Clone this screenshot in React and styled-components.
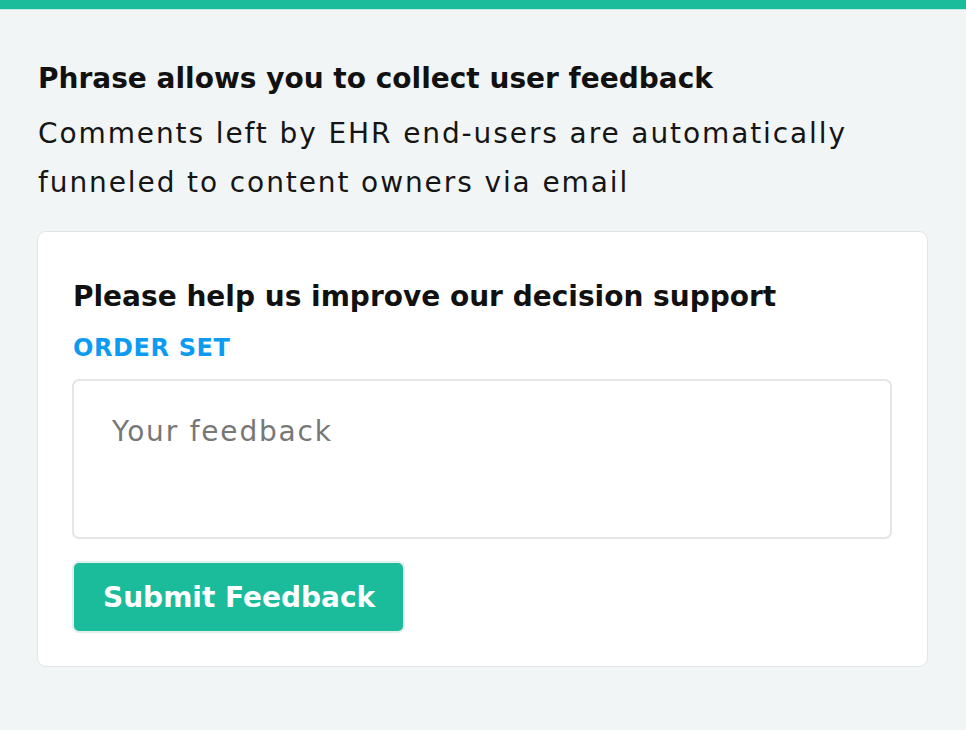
import styled, { createGlobalStyle } from "styled-components";

const GlobalStyle = createGlobalStyle`
    html, body {
        margin: 0;
        padding: 0;
        background: #f2f5f5;
    }
    body {
        font-family: "DejaVu Sans", "Open Sans", sans-serif;
        color: #111;
    }
`;

const Page = styled.div`
    width: 966px;
    height: 730px;
    background: #f2f5f5;
    overflow: hidden;
`;

const TopBar = styled.div`
    height: 9px;
    background: #1abc9c;
    border-bottom: 1px solid #c8ebe3;
`;

const Content = styled.div`
    padding: 52px 38px 0 37px;
`;

const Heading = styled.h2`
    margin: 0 0 0 1px;
    font-size: 28px;
    font-weight: 700;
    line-height: 34px;
    color: #111;
`;

const Intro = styled.p`
    margin: 13px 0 0 1px;
    font-size: 28px;
    font-weight: 400;
    line-height: 49px;
    letter-spacing: 1.9px;
    color: #151515;
`;

const Card = styled.div`
    margin-top: 24px;
    background: #fff;
    border: 1px solid #e2e5e5;
    border-radius: 9px;
    padding: 47px 35px 33px 34px;
    display: flex;
    flex-direction: column;
    align-items: flex-start;
`;

const CardTitle = styled.h3`
    margin: 0 0 0 1px;
    font-size: 28px;
    font-weight: 700;
    line-height: 36px;
    color: #111;
`;

const Category = styled.span`
    margin: 18px 0 0 1px;
    font-size: 24px;
    font-weight: 700;
    line-height: 30px;
    letter-spacing: 0.6px;
    color: #0d9bf2;
`;

const FeedbackBox = styled.textarea`
    box-sizing: border-box;
    margin-top: 16px;
    width: 100%;
    height: 160px;
    border: 2px solid #e5e5e5;
    border-radius: 7px;
    padding: 33px 38px;
    font-family: inherit;
    font-size: 28px;
    line-height: 36px;
    letter-spacing: 1.8px;
    resize: none;
    outline: none;
    color: #222;

    &::placeholder {
        color: #777;
    }
`;

const SubmitButton = styled.button`
    box-sizing: border-box;
    margin-top: 22px;
    background: #1abc9c;
    border: 2px solid #e4eeec;
    border-radius: 7px;
    padding: 0 28px 0 29px;
    height: 72px;
    font-family: inherit;
    font-size: 28px;
    font-weight: 700;
    color: #fff;
    cursor: pointer;
`;

function App() {
    return (
        <Page>
            <GlobalStyle />
            <TopBar />
            <Content>
                <Heading>Phrase allows you to collect user feedback</Heading>
                <Intro>
                    Comments left by EHR end-users are automatically
                    <br />
                    funneled to content owners via email
                </Intro>
                <Card>
                    <CardTitle>Please help us improve our decision support</CardTitle>
                    <Category>ORDER SET</Category>
                    <FeedbackBox placeholder="Your feedback" />
                    <SubmitButton>Submit Feedback</SubmitButton>
                </Card>
            </Content>
        </Page>
    );
}

export default App;
